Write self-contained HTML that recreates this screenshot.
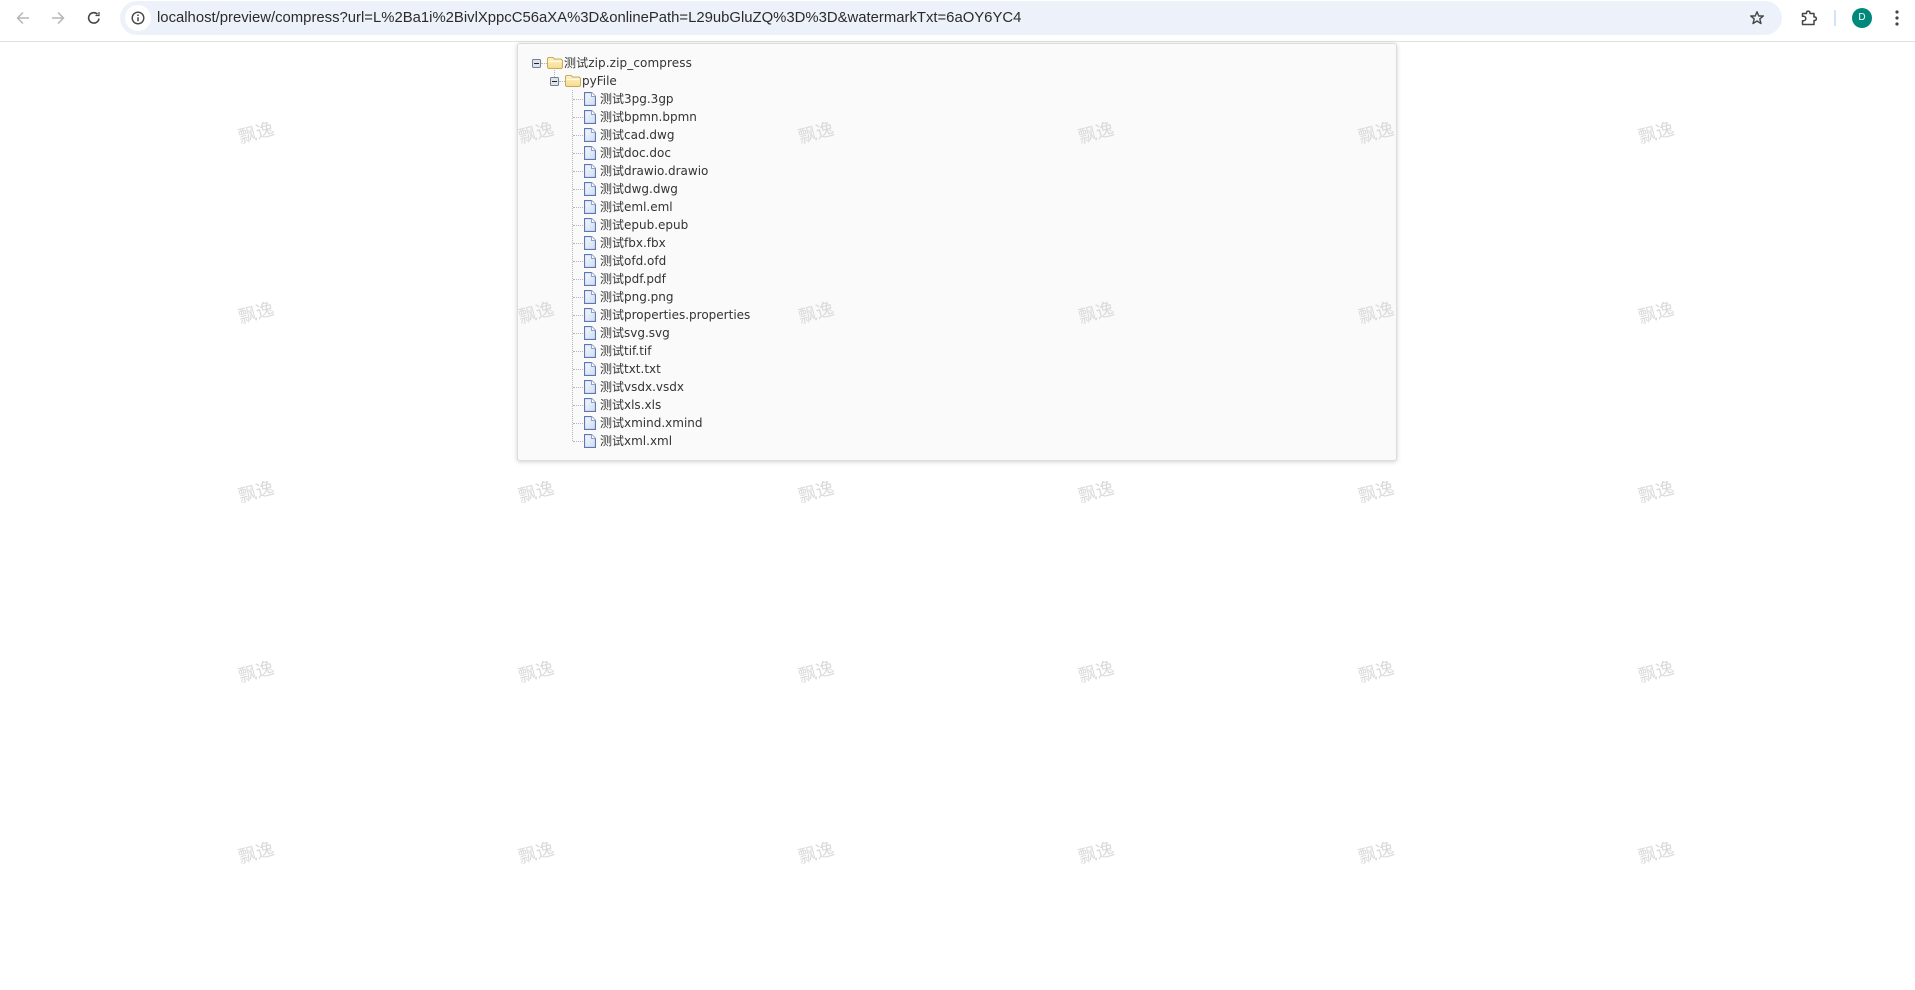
<!DOCTYPE html>
<html lang="zh">
<head>
<meta charset="utf-8">
<title>压缩包预览</title>
<style>
html,body{margin:0;padding:0;width:1915px;height:990px;overflow:hidden;background:#fff}
body{position:relative;font-family:"DejaVu Sans","Noto Sans CJK SC",sans-serif}
.bar{position:absolute;left:0;top:0;width:1915px;height:41px;background:#fff;border-bottom:1px solid #dfe1e5}
.omni{position:absolute;left:120px;top:1px;width:1662px;height:34px;background:#edf2fa;border-radius:17px}
.pill{position:absolute;left:125px;top:5px;width:26px;height:26px;border-radius:13px;background:#fff}
.url{position:absolute;left:157px;top:9px;font:14.87px/18px "Liberation Sans",sans-serif;color:#2b2b2b;white-space:nowrap}
svg{position:absolute;display:block;overflow:visible}
.avatar{position:absolute;left:1852px;top:8px;width:20px;height:20px;border-radius:10px;background:#00897b;color:#fff;font:10px/20px "Liberation Sans",sans-serif;text-align:center}
.sep{position:absolute;left:1834px;top:10px;width:2px;height:16px;background:#d3e3fd}
.panel{position:absolute;left:517px;top:43px;width:880px;height:418px;box-sizing:border-box;background:#fafafa;border:1px solid #dcdcdc;border-radius:3px;box-shadow:0 1px 5px rgba(0,0,0,.18)}
.t{position:absolute;font-size:12px;line-height:18px;color:#333;white-space:nowrap}
.wm{position:absolute;width:60px;text-align:center;margin-left:-30px;font:18px/24px "Noto Sans CJK SC",sans-serif;color:#dadada;transform:rotate(-15deg);white-space:nowrap}
.vl{position:absolute;width:0;border-left:1px dotted #b5b5b5}
.hl{position:absolute;height:0;border-top:1px dotted #b5b5b5}
</style>
</head>
<body>
<svg width="0" height="0" style="position:absolute">
<defs>
<linearGradient id="fg" x1="0" y1="0" x2="0" y2="1"><stop offset="0" stop-color="#fdf3c4"/><stop offset="1" stop-color="#f7dc8e"/></linearGradient>
<linearGradient id="dg" x1="0" y1="0" x2="1" y2="1"><stop offset="0" stop-color="#f4f8fe"/><stop offset="1" stop-color="#cddcf3"/></linearGradient>
<symbol id="fo" viewBox="0 0 16 12"><path d="M.5 3V1.500L1.500.5H6L7.500 2H14L15.500 3.500V10.500L14.500 11.500H1.500L.5 10.500Z" fill="url(#fg)" stroke="#c9a95b"/><path d="M1.500 4.500H14.500" stroke="#fffbe6"/></symbol>
<symbol id="fi" viewBox="0 0 12 14"><path d="M.5.5H7.500L11.500 4.500V13.500H.5Z" fill="url(#dg)" stroke="#5f78b0" stroke-width="1.200"/><path d="M7.500.5V4.500H11.500" fill="#fff" stroke="#8ea2cb"/></symbol>
<symbol id="mi" viewBox="0 0 9 9"><rect x=".5" y=".5" width="8" height="8" rx="1" fill="#dfe4ea" stroke="#6f7f95"/><path d="M2 4.500H7" stroke="#222"/></symbol>
</defs>
</svg>

<div class="bar"></div>
<svg style="left:15px;top:10px" width="16" height="16" viewBox="0 0 16 16" fill="none" stroke="#b4b6b9" stroke-width="1.500"><path d="M14 8H2.500M8 2.500L2.500 8L8 13.500"/></svg>
<svg style="left:50px;top:10px" width="16" height="16" viewBox="0 0 16 16" fill="none" stroke="#b4b6b9" stroke-width="1.500"><path d="M2 8H13.500M8 2.500L13.500 8L8 13.500"/></svg>
<svg style="left:86px;top:10px" width="16" height="16" viewBox="0 0 16 16" fill="none" stroke="#444746" stroke-width="1.600"><path d="M13 8.500A5.200 5.200 0 1 1 11.500 4.200"/><path d="M13 2V5.500H9.500" stroke-width="1.200"/></svg>
<div class="omni"></div>
<div class="pill"></div>
<svg style="left:130px;top:10px" width="16" height="16" viewBox="0 0 16 16" fill="none" stroke="#444746"><circle cx="8" cy="8" r="5.800" stroke-width="1.400"/><path d="M8 7.200V11.200" stroke-width="1.500"/><path d="M8 4.500V6" stroke-width="1.500"/></svg>
<div class="url">localhost/preview/compress?url=L%2Ba1i%2BivlXppcC56aXA%3D&amp;onlinePath=L29ubGluZQ%3D%3D&amp;watermarkTxt=6aOY6YC4</div>
<svg style="left:1749px;top:10px" width="16" height="16" viewBox="0 0 16 16" fill="none" stroke="#444746" stroke-width="1.400"><path d="M8 1.800L9.800 6H14.300L10.800 8.900L12 13.600L8 11L4 13.600L5.200 8.900L1.700 6H6.200Z" stroke-linejoin="round"/></svg>
<svg style="left:1800px;top:9px" width="18" height="18" viewBox="0 0 18 18" fill="none" stroke="#444746" stroke-width="1.500"><path d="M2.500 4.500H6.500V3.500A1.800 1.800 0 0 1 10 3.500V4.500H14V8H15A1.800 1.800 0 0 1 15 11.500H14V15.500H2.500V11.800H3.500A2.300 2.300 0 0 0 3.500 7.200H2.500Z" stroke-linejoin="round"/></svg>
<div class="sep"></div>
<div class="avatar">D</div>
<svg style="left:1894px;top:10px" width="6" height="16" viewBox="0 0 6 16" fill="#444746"><circle cx="3" cy="2" r="1.600"/><circle cx="3" cy="8" r="1.600"/><circle cx="3" cy="14" r="1.600"/></svg>

<div class="panel"></div>
<div class="vl" style="left:572px;top:90px;height:351px"></div>
<div class="vl" style="left:554px;top:70px;height:7px"></div>
<div class="hl" style="left:541px;top:63px;width:6px"></div>
<div class="hl" style="left:559px;top:81px;width:6px"></div>

<svg style="left:532px;top:59px" width="9" height="9"><use href="#mi"/></svg>
<svg style="left:547px;top:57px" width="16" height="12"><use href="#fo"/></svg>
<div class="t" style="left:564px;top:54px;letter-spacing:.1px">测试zip.zip_compress</div>
<svg style="left:550px;top:77px" width="9" height="9"><use href="#mi"/></svg>
<svg style="left:565px;top:75px" width="16" height="12"><use href="#fo"/></svg>
<div class="t" style="left:582px;top:72px">pyFile</div>

<div class="hl" style="left:573px;top:99px;width:10px"></div><svg style="left:584px;top:92px" width="12" height="14"><use href="#fi"/></svg><div class="t" style="left:600px;top:90px">测试3pg.3gp</div>
<div class="hl" style="left:573px;top:117px;width:10px"></div><svg style="left:584px;top:110px" width="12" height="14"><use href="#fi"/></svg><div class="t" style="left:600px;top:108px">测试bpmn.bpmn</div>
<div class="hl" style="left:573px;top:135px;width:10px"></div><svg style="left:584px;top:128px" width="12" height="14"><use href="#fi"/></svg><div class="t" style="left:600px;top:126px">测试cad.dwg</div>
<div class="hl" style="left:573px;top:153px;width:10px"></div><svg style="left:584px;top:146px" width="12" height="14"><use href="#fi"/></svg><div class="t" style="left:600px;top:144px">测试doc.doc</div>
<div class="hl" style="left:573px;top:171px;width:10px"></div><svg style="left:584px;top:164px" width="12" height="14"><use href="#fi"/></svg><div class="t" style="left:600px;top:162px">测试drawio.drawio</div>
<div class="hl" style="left:573px;top:189px;width:10px"></div><svg style="left:584px;top:182px" width="12" height="14"><use href="#fi"/></svg><div class="t" style="left:600px;top:180px">测试dwg.dwg</div>
<div class="hl" style="left:573px;top:207px;width:10px"></div><svg style="left:584px;top:200px" width="12" height="14"><use href="#fi"/></svg><div class="t" style="left:600px;top:198px">测试eml.eml</div>
<div class="hl" style="left:573px;top:225px;width:10px"></div><svg style="left:584px;top:218px" width="12" height="14"><use href="#fi"/></svg><div class="t" style="left:600px;top:216px">测试epub.epub</div>
<div class="hl" style="left:573px;top:243px;width:10px"></div><svg style="left:584px;top:236px" width="12" height="14"><use href="#fi"/></svg><div class="t" style="left:600px;top:234px">测试fbx.fbx</div>
<div class="hl" style="left:573px;top:261px;width:10px"></div><svg style="left:584px;top:254px" width="12" height="14"><use href="#fi"/></svg><div class="t" style="left:600px;top:252px">测试ofd.ofd</div>
<div class="hl" style="left:573px;top:279px;width:10px"></div><svg style="left:584px;top:272px" width="12" height="14"><use href="#fi"/></svg><div class="t" style="left:600px;top:270px">测试pdf.pdf</div>
<div class="hl" style="left:573px;top:297px;width:10px"></div><svg style="left:584px;top:290px" width="12" height="14"><use href="#fi"/></svg><div class="t" style="left:600px;top:288px">测试png.png</div>
<div class="hl" style="left:573px;top:315px;width:10px"></div><svg style="left:584px;top:308px" width="12" height="14"><use href="#fi"/></svg><div class="t" style="left:600px;top:306px">测试properties.properties</div>
<div class="hl" style="left:573px;top:333px;width:10px"></div><svg style="left:584px;top:326px" width="12" height="14"><use href="#fi"/></svg><div class="t" style="left:600px;top:324px">测试svg.svg</div>
<div class="hl" style="left:573px;top:351px;width:10px"></div><svg style="left:584px;top:344px" width="12" height="14"><use href="#fi"/></svg><div class="t" style="left:600px;top:342px">测试tif.tif</div>
<div class="hl" style="left:573px;top:369px;width:10px"></div><svg style="left:584px;top:362px" width="12" height="14"><use href="#fi"/></svg><div class="t" style="left:600px;top:360px">测试txt.txt</div>
<div class="hl" style="left:573px;top:387px;width:10px"></div><svg style="left:584px;top:380px" width="12" height="14"><use href="#fi"/></svg><div class="t" style="left:600px;top:378px">测试vsdx.vsdx</div>
<div class="hl" style="left:573px;top:405px;width:10px"></div><svg style="left:584px;top:398px" width="12" height="14"><use href="#fi"/></svg><div class="t" style="left:600px;top:396px">测试xls.xls</div>
<div class="hl" style="left:573px;top:423px;width:10px"></div><svg style="left:584px;top:416px" width="12" height="14"><use href="#fi"/></svg><div class="t" style="left:600px;top:414px">测试xmind.xmind</div>
<div class="hl" style="left:573px;top:441px;width:10px"></div><svg style="left:584px;top:434px" width="12" height="14"><use href="#fi"/></svg><div class="t" style="left:600px;top:432px">测试xml.xml</div>

<div class="wm" style="left:256px;top:120px">飘逸</div><div class="wm" style="left:536px;top:120px">飘逸</div><div class="wm" style="left:816px;top:120px">飘逸</div><div class="wm" style="left:1096px;top:120px">飘逸</div><div class="wm" style="left:1376px;top:120px">飘逸</div><div class="wm" style="left:1656px;top:120px">飘逸</div>
<div class="wm" style="left:256px;top:300px">飘逸</div><div class="wm" style="left:536px;top:300px">飘逸</div><div class="wm" style="left:816px;top:300px">飘逸</div><div class="wm" style="left:1096px;top:300px">飘逸</div><div class="wm" style="left:1376px;top:300px">飘逸</div><div class="wm" style="left:1656px;top:300px">飘逸</div>
<div class="wm" style="left:256px;top:479px">飘逸</div><div class="wm" style="left:536px;top:479px">飘逸</div><div class="wm" style="left:816px;top:479px">飘逸</div><div class="wm" style="left:1096px;top:479px">飘逸</div><div class="wm" style="left:1376px;top:479px">飘逸</div><div class="wm" style="left:1656px;top:479px">飘逸</div>
<div class="wm" style="left:256px;top:659px">飘逸</div><div class="wm" style="left:536px;top:659px">飘逸</div><div class="wm" style="left:816px;top:659px">飘逸</div><div class="wm" style="left:1096px;top:659px">飘逸</div><div class="wm" style="left:1376px;top:659px">飘逸</div><div class="wm" style="left:1656px;top:659px">飘逸</div>
<div class="wm" style="left:256px;top:840px">飘逸</div><div class="wm" style="left:536px;top:840px">飘逸</div><div class="wm" style="left:816px;top:840px">飘逸</div><div class="wm" style="left:1096px;top:840px">飘逸</div><div class="wm" style="left:1376px;top:840px">飘逸</div><div class="wm" style="left:1656px;top:840px">飘逸</div>
</body>
</html>
